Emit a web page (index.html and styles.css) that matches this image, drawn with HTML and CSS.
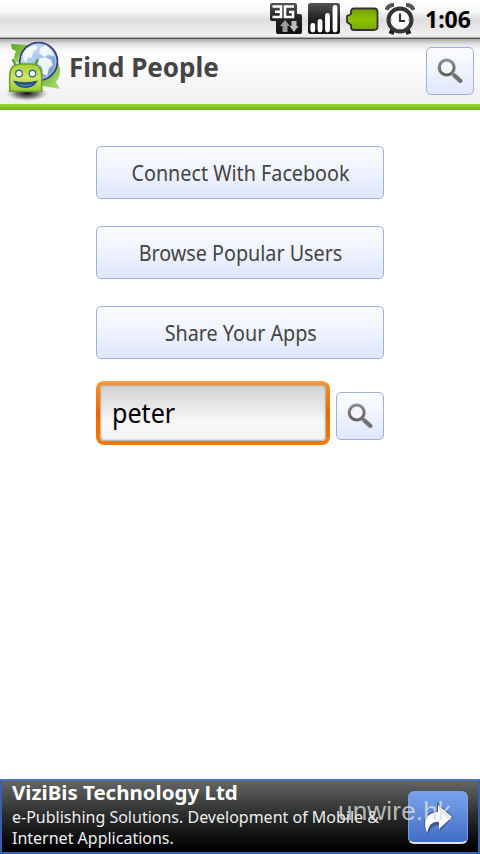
FILE: index.html
```html
<!DOCTYPE html>
<html lang="en">
<head>
<meta charset="utf-8">
<title>Find People</title>
<link rel="stylesheet" href="styles.css">
</head>
<body>
<svg class="defs" width="0" height="0" aria-hidden="true">
  <defs>
    <linearGradient id="dark" x2="0" y2="1"><stop stop-color="#555"/><stop offset=".5" stop-color="#222"/><stop offset="1" stop-color="#111"/></linearGradient>
    <linearGradient id="lens" x2="0" y2="1"><stop stop-color="#8b8b8b"/><stop offset="1" stop-color="#606060"/></linearGradient>
    <symbol id="search" viewBox="0 0 26 26">
      <path d="M15.500 16 24 24" stroke="#c8cad4" stroke-width="5"/>
      <circle cx="9.700" cy="9.700" r="7.300" fill="none" stroke="#c0c1c8" stroke-width="4.200"/>
      <circle cx="9.700" cy="9.500" r="7.300" fill="#f5f6fb" stroke="url(#lens)" stroke-width="2.800"/>
      <path d="M14.500 14.500 18 18" stroke="#777" stroke-width="2.400"/>
      <path d="M17.500 17.500 23.500 23" stroke="#707070" stroke-width="3.800" stroke-linecap="round"/>
    </symbol>
  </defs>
</svg>
<div class="screen">
  <div class="status">
    <svg class="net" width="32" height="32" viewBox="0 0 32 32">
      <path d="M2 0H25Q27 0 27 2V11H30Q32 11 32 13V29Q32 31 30 31H8Q6 31 6 29V18H2Q0 18 0 16V2Q0 0 2 0Z" fill="url(#dark)"/>
      <path d="M2.500 3.500H11V14H2.500M5 8.700H11M24 3.500H15V14H23V9H19" fill="none" stroke="#fff" stroke-width="2.600"/>
      <path d="M15 17 20 23H17.500V29H12.500V23H10Z" fill="#999"/><path d="M24 29 19.500 23H21.500V18H26.500V23H28.500Z" fill="#bbb"/>
    </svg>
    <svg class="signal" width="32" height="32" viewBox="0 0 32 32">
      <rect width="32" height="31" rx="2.500" fill="url(#dark)"/>
      <path d="M4.800 22.500V27M12 18.500V27M19.500 12.500V27M27 4.500V27" stroke="#fff" stroke-width="4.800" stroke-linecap="round"/>
    </svg>
    <svg class="battery" width="33" height="25" viewBox="0 0 33 25">
      <defs><linearGradient id="bat" x2="0" y2="1"><stop stop-color="#719f00"/><stop offset=".5" stop-color="#8fc300"/><stop offset="1" stop-color="#78a900"/></linearGradient></defs>
      <path d="M8 1.500H28Q31.500 1.500 31.500 5V19.500Q31.500 23 28 23H8Q5 23 5 20V18L1 15V9L5 7V5Q5 1.500 8 1.500Z" fill="url(#bat)" stroke="#333" stroke-width="1.800"/>
    </svg>
    <svg class="alarm" width="30" height="32" viewBox="0 0 30 32">
      <path d="M1.500 7Q3 2 9 2M28.500 7Q27 2 21 2" fill="none" stroke="#555" stroke-width="4"/>
      <path d="M6 31 8 26M24 31 22 26" stroke="#222" stroke-width="5"/>
      <circle cx="15" cy="17" r="11.500" fill="#fff" stroke="#353535" stroke-width="4"/>
      <path d="M15 10.500V18H20" fill="none" stroke="#333" stroke-width="2.200"/>
      <path d="M15 7.500V8.500M15 25.500V26.500M6 17H7M23 17H24" stroke="#777"/>
    </svg>
    <span class="time">1:06</span>
  </div>
  <header class="header">
    <svg class="logo" width="62" height="64" viewBox="0 0 62 64">
      <defs>
        <radialGradient id="shadow"><stop stop-color="#000" stop-opacity=".95"/><stop offset=".5" stop-color="#333" stop-opacity=".65"/><stop offset="1" stop-color="#777" stop-opacity="0"/></radialGradient>
        <linearGradient id="droid" x2="0" y2="1"><stop stop-color="#a5cf39"/><stop offset=".5" stop-color="#d4e45c"/><stop offset="1" stop-color="#9bc832"/></linearGradient>
        <linearGradient id="sea" x2="1" y2="1"><stop stop-color="#e9f4ff"/><stop offset=".5" stop-color="#9fc1e8"/><stop offset="1" stop-color="#5f84c5"/></linearGradient>
        <linearGradient id="leaf" x2="1" y2="1"><stop stop-color="#53a51d"/><stop offset="1" stop-color="#b3e378"/></linearGradient>
      </defs>
      <ellipse cx="27" cy="54.500" rx="21" ry="7.500" fill="url(#shadow)"/>
      <path d="M11 5 30 6Q22 10 18 20L22 24 15 23Q13 18 16 12L12 10Z" fill="url(#leaf)"/>
      <path d="M58 24Q63 33 56 43L60 50 43 47 41 43Q54 39 58 24Z" fill="url(#leaf)"/>
      <circle cx="38.600" cy="22.500" r="18.800" fill="url(#sea)" stroke="#343e77" stroke-width="1.800"/>
      <circle cx="38.600" cy="22.500" r="17.300" fill="none" stroke="#b8cae8"/>
      <path d="M23 15 27 9 35 6 38 9 33 13 32 18 27 19 27 23 24 22ZM40 9 46 6 52 12 54 17 48 16 44 18 39 14ZM39 20 45 18 51 21 53 26 49 29 47 37 43 35 42 28 38 25Z" fill="#f8fbff" opacity=".9"/>
      <path d="M16 27 13 21M34.500 27 37.500 21" stroke="#62982a" stroke-width="2.200" stroke-linecap="round"/>
      <path d="M9.700 52.300V37Q10 25 20 25H31Q41.500 25 41.700 37V52.300Z" fill="url(#droid)" stroke="#64a52a" stroke-width="1.600"/>
      <circle cx="19" cy="34.500" r="3.300" fill="#fff" stroke="#36718d" stroke-width="1.400"/><circle cx="32.500" cy="34.500" r="3.300" fill="#fff" stroke="#36718d" stroke-width="1.400"/>
      <path d="M13 41.500Q25 45 38 41.500Q34 49 25.500 49T13 41.500Z" fill="#235183"/><path d="M17 44.500Q25 47 34 44.500Q30 47.500 25.500 47.500T17 44.500Z" fill="#4f83b3"/>
    </svg>
    <h1 class="title"><span>Find People</span></h1>
    <button class="btn icon-btn"><svg width="26" height="26"><use href="#search"/></svg></button>
  </header>
  <div class="accent"></div>
  <main class="main">
    <button class="btn wide"><span>Connect With Facebook</span></button>
    <button class="btn wide"><span>Browse Popular Users</span></button>
    <button class="btn wide"><span>Share Your Apps</span></button>
    <div class="search-row">
      <div class="frame"><div class="field"><span>peter</span></div></div>
      <button class="btn icon-btn"><svg width="26" height="26"><use href="#search"/></svg></button>
    </div>
  </main>
  <footer class="ad">
    <div class="copy">
      <div class="ad-title"><span>ViziBis Technology Ltd</span></div>
      <div class="ad-line"><span>e-Publishing Solutions. Development of Mobile &amp;</span></div>
      <div class="ad-line"><span>Internet Applications.</span></div>
    </div>
    <div class="go">
      <svg width="32" height="34" viewBox="0 0 32 34"><path d="M15 0 31 15 18 29V23Q9 22 6 33Q-5 13 15 8Z" fill="#354d80" opacity=".75"/><path d="M16 3 30 15 17 27V20Q8 18 5 31Q-2 12 16 10Z" fill="#fff"/></svg>
    </div>
    <span class="watermark">unwire.hk</span>
  </footer>
</div>
</body>
</html>
```
FILE: styles.css
```css
* { box-sizing: border-box; }
body { margin: 0; background: #fff; font-family: "Noto Sans", "Open Sans", sans-serif; }
svg { display: block; flex: none; }
.defs { position: absolute; }
.screen { width: 480px; height: 854px; display: flex; flex-direction: column; overflow: hidden; }
span { white-space: nowrap; }
.status { height: 39px; flex: none; display: flex; align-items: flex-start; padding: 3px 9px 0 270px; background: linear-gradient(#fff 0%, #f8f8f8 30%, #dedede 52%, #efefef 90%, #e8e8e8 100%); border-bottom: 1px solid #555; box-shadow: inset 0 -1px #aaa; }
.signal { margin-left: 6px; }
.battery { margin: 4px 0 0 6px; }
.alarm { margin-left: 6px; }
.time { margin-left: 10px; font-size: 23px; line-height: 32px; font-weight: 700; color: #000; }
.header { height: 65px; flex: none; display: flex; padding: 0 6px 0 0; background: linear-gradient(#aaa 0, #e1e1e1 5px, #fafafa 11px, #fff 20px, #f0eff1 65px); }
.accent { height: 6px; flex: none; background: linear-gradient(#a0de35, #69ad1c); }
.title { width: 150px; margin: 0 0 0 7px; font-size: 26px; line-height: 57px; font-weight: 700; color: #444; }
.title span, .wide span, .field span, .copy span { display: inline-block; transform-origin: left; }
.btn { display: flex; align-items: center; justify-content: center; flex: none; padding: 0; border: 1px solid #9eb1df; border-radius: 5px; background: linear-gradient(#fcfdff, #eff3ff 50%, #dfe6ff); font-family: inherit; color: #444; }
.icon-btn { width: 48px; height: 48px; }
.header .icon-btn { margin: 8px 0 0 auto; }
.main { flex: 1; display: flex; flex-direction: column; align-items: center; padding-top: 36px; }
.wide { width: 288px; height: 53px; margin-bottom: 27px; padding: 0 0 2px 1px; font-size: 22px; line-height: 30px; }
.wide span { transform-origin: center; transform: scaleX(.897); }
.search-row { display: flex; width: 288px; justify-content: space-between; margin-top: -5px; }
.search-row .icon-btn { margin-top: 11px; }
.frame { width: 234px; height: 64px; border-radius: 8px; padding: 4px; background: linear-gradient(#ffa04a, #fb8a24 5px, #ea6800 50%, #f67a00); }
.field { height: 56px; border-radius: 4px; padding: 0 12px; background: linear-gradient(#d2d2d2, #ebebeb 45%, #f8f8f8 65%, #f4f4f4); box-shadow: inset 0 0 2px 1px #b5a79b; font-size: 27px; line-height: 56px; color: #000; }
.field span { transform: scaleX(.93); }
.ad { position: relative; height: 75px; flex: none; display: flex; justify-content: space-between; border: 2px solid #365fae; border-top-color: #4c74bd; padding: 0 10px; background: linear-gradient(#646464, #292b2b 50%, #000 95%); color: #fff; }
.ad-title { height: 26px; font-size: 20px; line-height: 24px; font-weight: 700; }
.ad-title span { transform: scaleX(1.024); }
.ad-line { height: 21px; font-size: 16px; line-height: 21px; color: #eee; }
.copy { width: 370px; }
.go { width: 60px; height: 53px; margin-top: 10px; border-radius: 6px; border: 1px solid #7ba0e5; border-bottom: 2px solid #dfe4f0; background: linear-gradient(#78a4ec, #426dc6); padding: 10px 0 0 13px; }
.watermark { position: absolute; left: 336px; top: 14px; font: 26px/32px "Liberation Sans", sans-serif; letter-spacing: .2px; color: rgba(220,220,220,.8); }
```
